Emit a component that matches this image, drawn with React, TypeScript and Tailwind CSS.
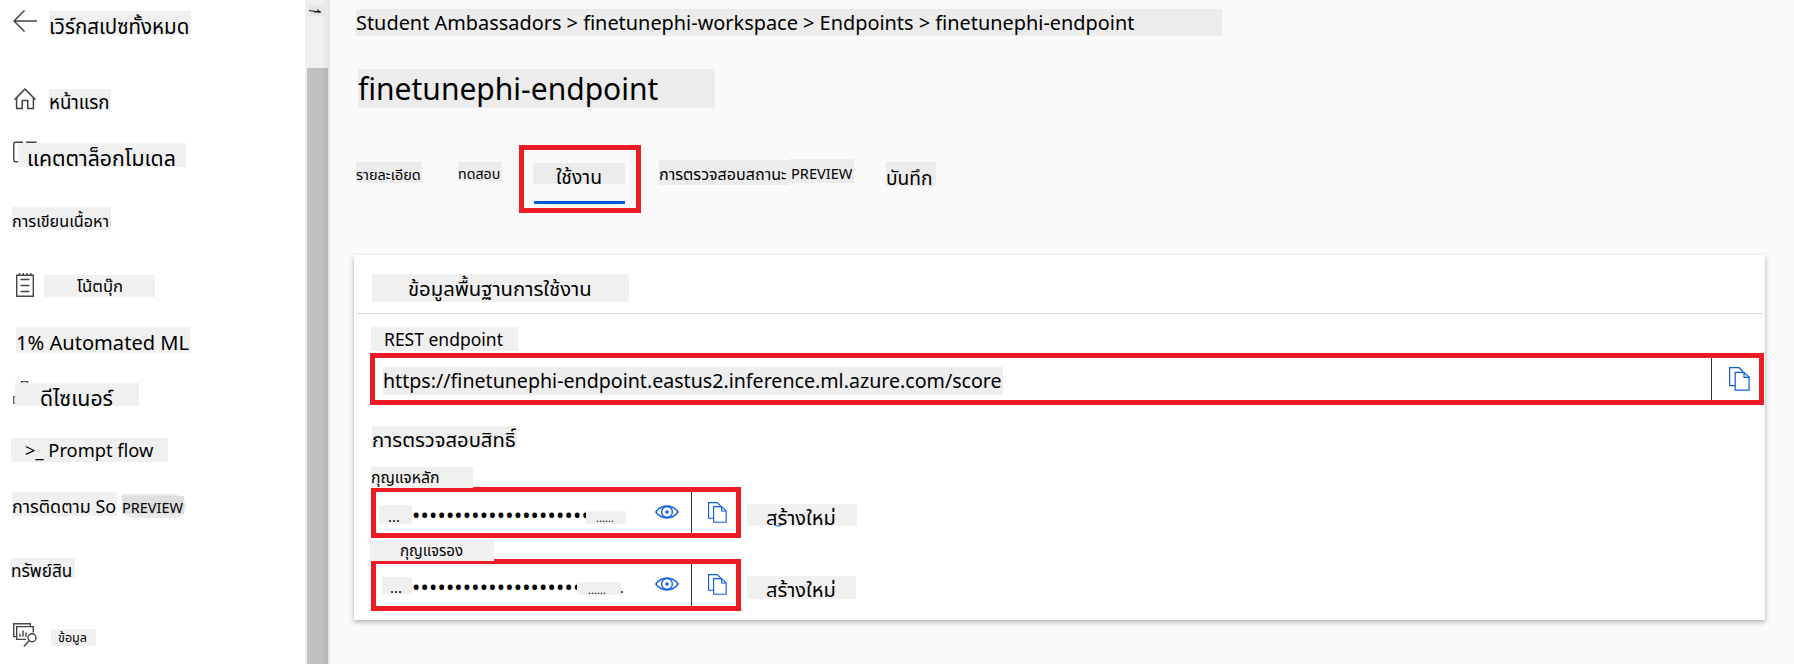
import type { ReactNode } from "react";

function Chip({ className, children }: { className: string; children?: ReactNode }) {
  return <div className={`shrink-0 whitespace-nowrap text-black ${className}`}>{children}</div>;
}

function ArrowLeftIcon() {
  return (
    <svg className="ml-[13px] h-[22px] w-6 shrink-0" viewBox="0 0 24 22" fill="none" stroke="#444" strokeWidth="1.5">
      <path d="M24 11H1M11.5 0.5L1 11l10.5 10.5" />
    </svg>
  );
}

function HomeIcon() {
  return (
    <svg className="ml-[14px] h-[22px] w-[22px] shrink-0" viewBox="0 0 22 22" fill="none" stroke="#444" strokeWidth="1.5">
      <path d="M0.6 11.6L11 1l10.4 10.6M2.6 10v10.4h5.6v-7.8h5.6v7.8h5.6V10" />
    </svg>
  );
}

function BookIcon() {
  return (
    <svg className="ml-[13px] h-[23px] w-6 shrink-0" viewBox="0 0 24 23" fill="none" stroke="#444" strokeWidth="1.4">
      <path d="M10 1.2H2.5Q0.8 1.2 0.8 3v16Q0.8 20.8 2.5 20.8H6M13 1.2h10.5" />
    </svg>
  );
}

function NotebookIcon() {
  return (
    <svg className="ml-4 h-6 w-[18px] shrink-0" viewBox="0 0 18 24" fill="none" stroke="#444" strokeWidth="1.4">
      <path d="M0.7 2.2h16.6v21H0.7zM3.5 0v2.5M7.3 0v2.5M11.1 0v2.5M14.9 0v2.5M4.5 6.5h9M4.5 12.5h9M4.5 18.5h9" />
    </svg>
  );
}

function DesignerIcon() {
  return (
    <svg className="ml-[13px] h-6 w-[17px] shrink-0" viewBox="0 0 17 24" fill="none" stroke="#555" strokeWidth="1.2">
      <path d="M8.6 2V0.7h6V2M3 15.6H0.7v6.6H3" />
    </svg>
  );
}

function DataIcon() {
  return (
    <svg className="ml-[13px] h-6 w-6 shrink-0" viewBox="0 0 24 24" fill="none" stroke="#444" strokeWidth="1.4">
      <path d="M3.6 13.6H0.7V0.8h16.6v2.7M13 16.4H3.7V3.6h16.6v6" />
      <path d="M7 13.8v-3M10 13.8V7.5M13 13.8V9.6" />
      <circle cx="19" cy="14.8" r="4" />
      <path d="M16.2 17.8L10.8 23.4" />
    </svg>
  );
}

function EyeIcon() {
  return (
    <svg className="mt-[13px] h-[14px] w-6 shrink-0" viewBox="0 0 24 14" fill="none" stroke="#0b5cda" strokeWidth="1.3">
      <path d="M0.8 7Q5.5 1 12 1t11.2 6Q18.5 13 12 13T0.8 7z" />
      <circle cx="12" cy="7" r="5.4" />
      <circle cx="12" cy="7" r="1.1" fill="#0b5cda" />
    </svg>
  );
}

function CopyIcon({ className }: { className: string }) {
  return (
    <svg className={`shrink-0 ${className}`} viewBox="0 0 19 21" preserveAspectRatio="none" fill="none" stroke="#0b5cda" strokeWidth="1.1">
      <path d="M5.5 16.3H0.6V0.6h8.6l3.6 3.6" />
      <path d="M5.6 4.6h8l4.6 4.4v11.3H5.6z" fill="#fff" />
      <path d="M13.6 4.6V9h4.6" />
    </svg>
  );
}

function Sidebar() {
  return (
    <nav className="flex w-[305px] shrink-0 flex-col bg-white pt-[10px]">
      <div className="flex h-[25px]">
        <ArrowLeftIcon />
        <Chip className="mt-px ml-3 h-6 w-[142px] bg-[#f0f0f0] text-[20.5px] leading-[30px]">เวิร์กสเปซทั้งหมด</Chip>
      </div>
      <div className="mt-[53px] flex h-[22px]">
        <HomeIcon />
        <Chip className="mt-px ml-[13px] h-[21px] w-[62px] bg-[#f0f0f0] text-[18.6px] leading-[25px]">หน้าแรก</Chip>
      </div>
      <div className="mt-[31px] flex h-[26px]">
        <BookIcon />
        <Chip className="relative mt-[2px] -ml-[19px] h-6 w-[168px] bg-[#f0f0f0] pl-[9px] text-[21.3px] leading-[30px]">แคตตาล็อกโมเดล</Chip>
      </div>
      <div className="mt-10 flex h-[23px]">
        <Chip className="ml-3 h-[23px] w-[99px] bg-[#f0f0f0] text-[16.2px] leading-7">การเขียนเนื้อหา</Chip>
      </div>
      <div className="mt-[43px] flex h-6">
        <NotebookIcon />
        <Chip className="mt-[2px] ml-[10px] h-[22px] w-[111px] bg-[#f0f0f0] pl-[33px] text-[16.7px] leading-[21.6px]">โน้ตบุ๊ก</Chip>
      </div>
      <div className="mt-[30px] flex h-[26px]">
        <Chip className="ml-4 h-[26px] w-[174px] bg-[#f0f0f0] text-[20.1px] leading-[32px]">1% Automated ML</Chip>
      </div>
      <div className="mt-7 flex h-[25px]">
        <DesignerIcon />
        <Chip className="relative mt-[2px] -ml-[15px] h-[23px] w-[124px] bg-[#f0f0f0] pl-[25px] text-[21.3px] leading-[29px]">ดีไซเนอร์</Chip>
      </div>
      <div className="mt-8 flex h-6">
        <Chip className="ml-[11px] h-6 w-[157px] bg-[#f0f0f0] pl-[14px] text-[18.3px] leading-[23.7px]">&gt;_ Prompt flow</Chip>
      </div>
      <div className="mt-[29px] flex h-[27px]">
        <Chip className="mt-px ml-3 h-6 w-[105px] bg-[#f0f0f0] text-[17.9px] leading-[29px]">การติดตาม So</Chip>
        <div className="mt-[3px] ml-[5px] flex h-6 w-16 rounded-r-xl rounded-bl-xl bg-[#e9e9e9]">
          <Chip className="mt-[2px] h-[18px] w-[62px] bg-[#dfdfdf] text-[14.5px] leading-[23px]">PREVIEW</Chip>
        </div>
      </div>
      <div className="mt-10 flex h-5">
        <Chip className="ml-[11px] h-5 w-16 bg-[#f0f0f0] text-[17.2px] leading-[25px]">ทรัพย์สิน</Chip>
      </div>
      <div className="mt-[45px] flex h-6">
        <DataIcon />
        <Chip className="mt-[6px] ml-[14px] h-[17px] w-[45px] bg-[#f0f0f0] pl-[7px] text-[12.6px] leading-[17px]">ข้อมูล</Chip>
      </div>
    </nav>
  );
}

function Scrollbar() {
  return (
    <div className="flex w-[25px] shrink-0 flex-col bg-[#f0f0f0] bg-linear-to-r from-[#f0f0f0] from-70% to-[#e2e2e2]">
      <div className="mt-[5px] ml-[3px] flex h-[11px] w-[17px] bg-[#e6e6e6]">
        <svg className="mt-1 ml-px h-[5px] w-3" viewBox="0 0 12 5" fill="none" stroke="#111" strokeWidth="1">
          <path d="M0 1.6L11.5 3M8 0.5L11.5 3H5" />
        </svg>
      </div>
      <div className="mt-[52px] ml-[2px] w-[21px] grow bg-linear-to-r from-[#c1c1c1] from-60% to-[#b6b6b6]" />
    </div>
  );
}

function Tabs() {
  return (
    <div className="mt-[37px] ml-[26px] flex h-[68px]">
      <Chip className="mt-[17px] h-[21px] w-[66px] bg-[#ececec] text-[14.5px] leading-[25px]">รายละเอียด</Chip>
      <Chip className="mt-[17px] ml-9 h-[19px] w-11 bg-[#ececec] text-[14.2px] leading-[24.5px]">ทดสอบ</Chip>
      <div className="ml-[17px] flex w-[122px] flex-col border-[5px] border-[#ed1c24] pl-[9px]">
        <Chip className="mt-[13px] h-[21px] w-[92px] bg-[#ececec] pl-[23px] text-[19.3px] leading-[27px]">ใช้งาน</Chip>
        <div className="mt-[17px] ml-px h-[3px] w-[91px] bg-[#015cda]" />
      </div>
      <Chip className="mt-[15px] ml-[18px] h-[25px] w-[130px] bg-[#ececec] text-[16.1px] leading-[29.5px]">การตรวจสอบสถานะ</Chip>
      <Chip className="mt-[14px] h-6 w-[65px] bg-[#ececec] pl-[2px] text-[14.6px] leading-[28.5px]">PREVIEW</Chip>
      <Chip className="mt-[17px] ml-8 h-6 w-[50px] bg-[#ececec] text-[19.2px] leading-[31px]">บันทึก</Chip>
    </div>
  );
}

function KeyField({ height, lead, dots, tail, end }: { height: string; lead: string; dots: string; tail: string; end?: ReactNode }) {
  return (
    <div className={`flex w-[370px] shrink-0 border-[5px] border-[#ed1c24] bg-white ${height}`}>
      <Chip className={`bg-[#f0f0f0] text-[14.9px] ${lead}`}>...</Chip>
      <div className={`h-7 shrink-0 text-[22px] leading-7 tracking-[0.2px] whitespace-nowrap text-black ${dots}`}>
        ••••••••••••••••••••{end ? "" : "•"}
      </div>
      <Chip className={`relative bg-[#f0f0f0] text-[11.2px] ${tail}`}>......</Chip>
      <div className="flex grow text-[14px] leading-[28px]">{end}</div>
      <EyeIcon />
      <div className="ml-3 w-px bg-[#333]" />
      <CopyIcon className="mt-[10px] mr-[9px] ml-4 h-[21px] w-[19px]" />
    </div>
  );
}

function ConsumeCard() {
  return (
    <section className="mt-[42px] ml-6 flex h-[365px] w-[1411px] flex-col bg-white shadow-[0_2px_5px_rgba(0,0,0,0.3)]">
      <Chip className="mt-[19px] ml-[18px] h-7 w-[257px] bg-[#f0f0f0] pl-9 text-[20.3px] leading-[28px]">ข้อมูลพื้นฐานการใช้งาน</Chip>
      <div className="mx-[2px] mt-[11px] h-px shrink-0 bg-[#d8d8d8]" />
      <Chip className="mt-[13px] ml-[17px] h-6 w-[147px] bg-[#f0f0f0] pl-[13px] text-[17.5px] leading-[25px]">REST endpoint</Chip>
      <div className="mt-[2px] ml-4 flex h-[52px] w-[1394px] shrink-0 border-[5px] border-[#ed1c24]">
        <Chip className="mt-[9px] ml-2 h-7 w-[620px] bg-[#eeeeee] text-[19.63px] leading-[28.8px]">
          https://finetunephi-endpoint.eastus2.inference.ml.azure.com/score
        </Chip>
        <div className="ml-auto w-px bg-[#333]" />
        <CopyIcon className="mt-[9px] mr-[9px] ml-[17px] h-6 w-[21px]" />
      </div>
      <Chip className="mt-[21px] ml-[18px] h-[22px] w-[145px] bg-[#efefee] text-[20.2px] leading-[26.9px]">การตรวจสอบสิทธิ์</Chip>
      <Chip className="relative z-10 mt-[19px] ml-[17px] h-[21px] w-[102px] bg-[#efefee] text-[15.8px] leading-[21.5px]">กุญแจหลัก</Chip>
      <div className="-mt-px ml-[17px] flex h-[51px] shrink-0">
        <KeyField
          height="h-[51px]"
          lead="mt-[13px] ml-[3px] h-[19px] w-[33px] pl-[9px] leading-[22.5px]"
          dots="mt-2 w-[174px]"
          tail="mt-[19px] h-[13px] w-10 pl-[10px] leading-[14px]"
        />
        <Chip className="mt-[17px] ml-[6px] flex h-[22px] w-[110px] flex-col bg-[#f0f0f0] pl-[19px] text-[20px] leading-7">
          สร้างใหม่
          <svg className="-mt-[7px] ml-2 h-[2px] w-2 shrink-0" viewBox="0 0 8 2" fill="none" stroke="#0b5cda">
            <path d="M0.5 0.4Q4 2 7.5 0.4" />
          </svg>
        </Chip>
      </div>
      <Chip className="relative z-10 mt-[2px] ml-4 h-[21px] w-[124px] bg-[#f0f0f0] pl-[30px] text-[15.1px] leading-[20.8px]">กุญแจรอง</Chip>
      <div className="-mt-[2px] ml-[17px] flex h-[52px] shrink-0">
        <KeyField
          height="h-[52px]"
          lead="mt-[13px] ml-[6px] h-[17px] w-[30px] pl-2 leading-[20px]"
          dots="mt-2 w-[165px]"
          tail="mt-[18px] h-[13px] w-11 pl-[11px] leading-[15px]"
          end={<span className="mt-[10px] -ml-px">.</span>}
        />
        <Chip className="mt-[17px] ml-[6px] h-[23px] w-[109px] bg-[#f0f0f0] pl-[19px] text-[20px] leading-7">สร้างใหม่</Chip>
      </div>
    </section>
  );
}

export default function App() {
  return (
    <div className="flex h-[664px] w-[1794px] overflow-hidden bg-[#fafafa] font-['Noto_Sans','Noto_Sans_Thai',sans-serif]">
      <Sidebar />
      <Scrollbar />
      <main className="flex grow flex-col pt-[9px]">
        <Chip className="ml-[26px] h-[27px] w-[866px] bg-[#ececec] text-[19.9px] leading-[28.6px]">
          Student Ambassadors &gt; finetunephi-workspace &gt; Endpoints &gt; finetunephi-endpoint
        </Chip>
        <Chip className="mt-[33px] ml-7 h-[39px] w-[357px] bg-[#ececec] text-[30px] leading-[40px]">finetunephi-endpoint</Chip>
        <Tabs />
        <ConsumeCard />
      </main>
    </div>
  );
}
